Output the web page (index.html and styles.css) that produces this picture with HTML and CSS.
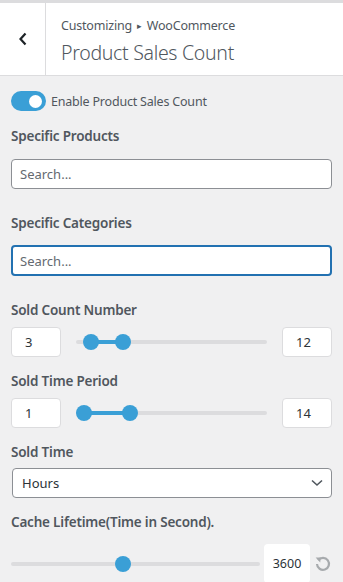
FILE: index.html
```html
<!DOCTYPE html>
<html>
<head>
	<meta charset="utf-8">
	<meta name="viewport" content="width=device-width, initial-scale=1">
	<title>Product Sales Count</title>
	<link rel="stylesheet" href="styles.css">
</head>
<body>
	<div class="header">
		<button class="back" aria-label="Back">
			<svg width="10" height="14" viewBox="0 0 10 14"><path d="M7.5 1.5 L2.5 7 L7.5 12.5" fill="none" stroke="#1d2327" stroke-width="2.2"/></svg>
		</button>
		<div class="title-wrap">
			<div class="crumbs">Customizing <span class="arrow">&#9656;</span> WooCommerce</div>
			<div class="title">Product Sales Count</div>
		</div>
	</div>

	<div class="panel">
		<label class="toggle-row">
			<span class="toggle"><span class="knob"></span></span>
			<span>Enable Product Sales Count</span>
		</label>

		<div class="label first">Specific Products</div>
		<input class="search" type="text" placeholder="Search...">

		<div class="label gap-lg">Specific Categories</div>
		<input class="search focused" type="text" placeholder="Search...">

		<div class="label after-search">Sold Count Number</div>
		<div class="range-row">
			<div class="num">3</div>
			<div class="slider">
				<div class="track"></div>
				<div class="fill" style="left: 7px; width: 32px;"></div>
				<div class="thumb" style="left: 7px;"></div>
				<div class="thumb" style="left: 39px;"></div>
			</div>
			<div class="num">12</div>
		</div>

		<div class="label">Sold Time Period</div>
		<div class="range-row">
			<div class="num">1</div>
			<div class="slider">
				<div class="track"></div>
				<div class="fill" style="left: 0px; width: 46px;"></div>
				<div class="thumb" style="left: 0px;"></div>
				<div class="thumb" style="left: 46px;"></div>
			</div>
			<div class="num">14</div>
		</div>

		<div class="label tight">Sold Time</div>
		<div class="select">
			<span>Hours</span>
			<svg width="12" height="8" viewBox="0 0 12 8"><path d="M1 1.5 L6 6 L11 1.5" fill="none" stroke="#50575e" stroke-width="1.6"/></svg>
		</div>

		<div class="label">Cache Lifetime(Time in Second).</div>
		<div class="cache-row">
			<div class="slider single">
				<div class="track"></div>
				<div class="thumb" style="left: 104px;"></div>
			</div>
			<div class="cache-num">3600</div>
			<svg class="reset" width="18" height="18" viewBox="0 0 18 18"><path d="M4.2 5.2 A6 6 0 1 1 3 9" fill="none" stroke="#a7aaad" stroke-width="2.2"/><path d="M1.6 2.6 L6.8 2.4 L6.2 7.4 Z" fill="#a7aaad"/></svg>
		</div>
	</div>
</body>
</html>
```

FILE: styles.css
```css
html { font-family: "Segoe UI", "Noto Sans", sans-serif; }

body {
	margin: 0;
	background: #f0f0f1;
	color: #50575e;
	font-size: 13px;
}

.header {
	display: flex;
	height: 72px;
	background: #fff;
	border-top: 3px solid #dcdcde;
	border-bottom: 1px solid #dcdcde;
}

.back {
	width: 46px;
	border: 0;
	border-right: 1px solid #dcdcde;
	background: #fff;
	padding: 0;
	display: flex;
	align-items: center;
	justify-content: center;
	cursor: pointer;
}

.title-wrap {
	padding: 14px 0 0 15px;
}

.crumbs {
	font-size: 12.5px;
	line-height: 18px;
	color: #50575e;
	letter-spacing: -0.2px;
}

.crumbs .arrow {
	font-size: 9px;
	margin: 0 2px;
	position: relative;
	top: -1px;
}

.title {
	margin-top: 5px;
	font-size: 19.5px;
	font-weight: 300;
	line-height: 24px;
	color: #50575e;
	letter-spacing: -0.3px;
}

.panel {
	padding: 15px 11px 0 11px;
}

.toggle-row {
	display: flex;
	align-items: center;
	gap: 5px;
	height: 20px;
	font-size: 12.5px;
	letter-spacing: -0.2px;
}

.toggle {
	width: 35px;
	height: 20px;
	border-radius: 10px;
	background: #3a9fd6;
	display: flex;
	align-items: center;
	justify-content: flex-end;
	padding-right: 4px;
	box-sizing: border-box;
}

.knob {
	width: 13px;
	height: 13px;
	border-radius: 50%;
	background: #fff;
}

.label {
	font-size: 13.5px;
	font-weight: 600;
	line-height: 20px;
	color: #50575e;
	margin: 14px 0 7px;
	letter-spacing: -0.2px;
}

.label.first { margin-top: 15px; margin-bottom: 13px; }
.label.gap-lg { margin-top: 24px; margin-bottom: 12px; }
.label.after-search { margin-top: 24px; margin-bottom: 7px; }
.label.tight { margin-bottom: 6px; }

.search {
	display: block;
	width: 100%;
	box-sizing: border-box;
	height: 30px;
	border: 1px solid #8c8f94;
	border-radius: 4px;
	background: #fff;
	padding: 0 8px;
	font-family: inherit;
	font-size: 13px;
	color: #2c3338;
	outline: none;
}

.search::placeholder { color: #646970; }

.search.focused {
	border: 2px solid #2271b1;
	padding-left: 7px;
	height: 31px;
}

.range-row {
	display: flex;
	align-items: center;
	height: 30px;
}

.num {
	width: 50px;
	height: 30px;
	box-sizing: border-box;
	background: #fff;
	border: 1px solid #dcdcde;
	border-radius: 4px;
	padding-left: 13px;
	line-height: 28px;
	font-size: 13px;
	color: #2c3338;
}

.range-row .slider {
	flex: 1;
	margin: 0 15px;
}

.slider {
	position: relative;
	height: 16px;
}

.track {
	position: absolute;
	left: 0;
	right: 0;
	top: 6px;
	height: 4px;
	border-radius: 2px;
	background: #dcdcde;
}

.fill {
	position: absolute;
	top: 6px;
	height: 4px;
	background: #3a9fd6;
	margin-left: 8px;
}

.thumb {
	position: absolute;
	top: 0;
	width: 16px;
	height: 16px;
	border-radius: 50%;
	background: #3a9fd6;
}

.select {
	display: flex;
	align-items: center;
	justify-content: space-between;
	height: 30px;
	box-sizing: border-box;
	margin-left: 1px;
	background: #fff;
	border: 1px solid #8c8f94;
	border-radius: 4px;
	padding: 0 8px 0 9px;
	font-size: 13px;
	color: #2c3338;
}

.cache-row {
	display: flex;
	align-items: center;
	margin-top: 12px;
	height: 39px;
}

.cache-row .slider {
	flex: 1;
	margin-right: 4px;
}

.cache-num {
	width: 46px;
	height: 39px;
	line-height: 39px;
	text-align: center;
	background: #fff;
	border-radius: 4px;
	font-size: 12.5px;
	color: #2c3338;
}

.reset {
	margin-left: 4px;
}
```
